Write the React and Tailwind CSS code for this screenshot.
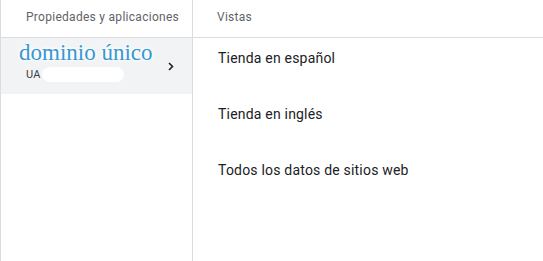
import React from "react";

export default function App() {
  const items = ["Tienda en español", "Tienda en inglés", "Todos los datos de sitios web"];
  return (
    <div className="flex h-[261px] w-[543px] bg-white font-['Roboto',sans-serif] overflow-hidden">
      <div className="flex w-[193px] shrink-0 flex-col border-l border-r border-[#dadce0]">
        <div className="h-[38px] border-b border-[#dadce0] pl-[25px] pt-[9px] text-[12px] leading-4 tracking-[0.28px] text-[#5f6368]">
          Propiedades y aplicaciones
        </div>
        <div className="flex h-[56px] items-start justify-between bg-[#f1f3f4]">
          <div className="flex flex-col">
            <div className="pl-[18px] pt-[3px] font-['Liberation_Serif',serif] text-[23px] leading-[23px] text-[#3797d2] [text-shadow:0_0_2px_#fff,0_0_3px_#fff,0_0_4px_#fff,0_0_5px_#fff]">
              dominio único
            </div>
            <div className="mt-[3px] flex items-center pl-[25px]">
              <span className="text-[11px] leading-[14px] tracking-[0.2px] text-[#3c4043]">UA</span>
              <span className="ml-[1px] h-[15px] w-[82px] rounded-full bg-white blur-[0.5px]"></span>
            </div>
          </div>
          <svg width="6" height="9" viewBox="0 0 6 9" className="mr-[18px] self-center" fill="none">
            <path d="M1 1 L4.5 4.5 L1 8" stroke="#202124" strokeWidth="1.6" />
          </svg>
        </div>
      </div>
      <div className="flex flex-1 flex-col">
        <div className="h-[38px] border-b border-[#dadce0] pl-[24px] pt-[9px] text-[12px] leading-4 tracking-[0.28px] text-[#5f6368]">
          Vistas
        </div>
        {items.map((t) => (
          <div key={t} className="h-[56px] pl-[25px] pt-[10px] text-[14px] leading-5 tracking-[0.2px] text-[#202124]">
            {t}
          </div>
        ))}
      </div>
    </div>
  );
}
